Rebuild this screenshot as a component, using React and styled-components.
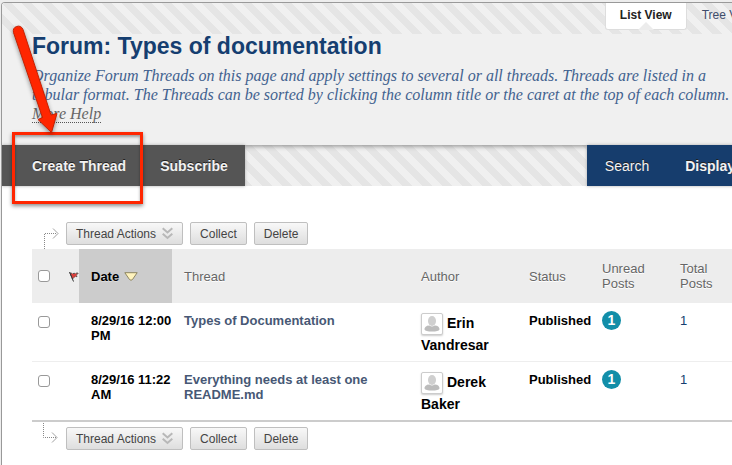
import React from "react";
import styled, { createGlobalStyle, css } from "styled-components";

const GlobalStyle = createGlobalStyle`
  * { box-sizing: border-box; }
  body {
    margin: 0;
    background: #fff;
    color: #000;
    font-family: "Liberation Sans", Arial, Helvetica, sans-serif;
    font-size: 13px;
    line-height: 15px;
  }
`;

const stripes = css`
  background-color: #f0f0f0;
  background-image: linear-gradient(
    45deg,
    #e5e5e5 25%,
    #f0f0f0 25%,
    #f0f0f0 50%,
    #e5e5e5 50%,
    #e5e5e5 75%,
    #f0f0f0 75%
  );
  background-size: 20px 20px;
`;

const Page = styled.div`
  position: relative;
  overflow: hidden;
  min-height: 100vh;
  padding: 2px 0 0 1px;
  background: #ededed;
`;

const Panel = styled.main`
  margin-right: -40px;
  min-height: calc(100vh - 2px);
  border: solid #999;
  border-width: 1px 0 0 1px;
  border-top-left-radius: 4px;
  background: #fff;
  overflow: hidden;
`;

const Header = styled.header`
  background: #f0f0f0;
  min-height: 142px;
`;

const TabStrip = styled.nav`
  ${stripes}
  display: flex;
  justify-content: flex-end;
  align-items: flex-start;
  height: 31px;
`;

const Tab = styled.a`
  position: relative;
  padding: 5px 14px 6px;
  color: ${(p) => (p.$active ? "#222" : "#3f4d6b")};
  font-size: 12px;
  font-weight: ${(p) => (p.$active ? "bold" : "normal")};
  text-decoration: none;
  border: 1px solid transparent;
  border-top: 0;
  &:last-child {
    padding-right: 16px;
  }
  ${(p) =>
    p.$active &&
    css`
      background: #fff;
      border-color: #ddd;
      border-radius: 0 0 3px 3px;
      &::after {
        content: "";
        position: absolute;
        left: calc(50% - 8px);
        bottom: -1px;
        border: 8px solid transparent;
        border-top: 0;
        border-bottom-color: #ececec;
      }
    `}
`;

const Intro = styled.div`
  padding: 0 30px;
`;

const Title = styled.h1`
  margin: 0;
  color: #153e70;
  font-size: 23px;
  line-height: 24px;
`;

const Help = styled.p`
  margin: 8px 0 0;
  max-width: 700px;
  color: #42628f;
  font-family: Georgia, "Liberation Serif", serif;
  font-size: 16px;
  font-style: italic;
  line-height: 19px;
`;

const HelpLine = styled.span`
  display: block;
`;

const HelpLink = styled.a`
  color: #666;
  text-decoration: none;
  border-bottom: 1px dotted #555;
`;

const Toolbar = styled.div`
  ${stripes}
  display: flex;
  justify-content: space-between;
  box-shadow: inset 0 5px 5px -4px #888;
`;

const Group = styled.div`
  display: flex;
  background: ${(p) => (p.$primary ? "#163d6d" : "#555")};
  box-shadow: 0 0 3px #aaa;
`;

const ToolButton = styled.button`
  height: 41px;
  padding: 0 ${(p) => (p.$menu ? 37 : 18)}px 0 18px;
  border: 0;
  background: none;
  color: #f2f2f2;
  font: ${(p) => (p.$plain ? "normal" : "bold")} 14px "Liberation Sans", Arial, sans-serif;
  text-shadow: 0 -1px 0 #222;
`;

const MainButton = styled(ToolButton)`
  padding: 0 17px;
  &:first-child {
    padding-left: 30px;
  }
`;

const Content = styled.section`
  padding: 36px 0 0 30px;
`;

const ActionBar = styled.div`
  display: flex;
  gap: 7px;
  padding-left: 10px;
  height: ${(p) => (p.$bottom ? 28 : 27)}px;
  align-items: ${(p) => (p.$bottom ? "flex-end" : "flex-start")};
`;

const Elbow = styled.svg`
  flex: none;
  align-self: flex-end;
  width: 17px;
  height: ${(p) => (p.$bottom ? 28 : 22)}px;
`;

const Action = styled.button`
  display: flex;
  align-items: center;
  gap: 6px;
  height: 23px;
  padding: 0 9px;
  border: 1px solid #bfbfbf;
  border-radius: 2px;
  background: linear-gradient(#f8f8f8, #dedede);
  color: #444;
  font: 12px "Liberation Sans", Arial, sans-serif;
  white-space: nowrap;
`;

const Table = styled.table`
  width: 100%;
  table-layout: fixed;
  border-collapse: separate;
  border-spacing: 0;
  border-bottom: 2px solid #ccc;
`;

const Col = styled.col`
  width: ${(p) => (p.$w ? `${p.$w}px` : "auto")};
`;

const Head = styled.th`
  height: 54px;
  padding: 0 ${(p) => (p.$tight ? 0 : 12)}px 0 ${(p) => (p.$tight ? 6 : 12)}px;
  background: ${(p) => (p.$sorted ? "#ccc" : "#ededed")};
  color: ${(p) => (p.$sorted ? "#000" : "#666")};
  font-weight: ${(p) => (p.$sorted ? "bold" : "normal")};
  text-align: left;
  vertical-align: middle;
  text-shadow: 0 1px 0 ${(p) => (p.$sorted ? "#ddd" : "#fff")};
`;

const Cell = styled.td`
  height: 58px;
  padding: ${(p) => p.$top || 10}px 0 0 ${(p) => (p.$tight ? 6 : 12)}px;
  font-weight: ${(p) => (p.$plain ? "normal" : "bold")};
  vertical-align: top;
`;

const Row = styled.tr`
  & + & > td {
    height: 59px;
    border-top: 1px solid #eee;
  }
`;

const Inline = styled.div`
  display: flex;
  align-items: center;
  justify-content: ${(p) => (p.$spread ? "space-between" : "flex-start")};
  gap: 5px;
`;

const Check = styled.input`
  appearance: none;
  display: block;
  width: 12px;
  height: 12px;
  margin: 0;
  border: 1px solid #999;
  border-radius: 3px;
  background: #fff;
`;

const ThreadLink = styled.a`
  display: block;
  max-width: 190px;
  color: #475875;
  text-decoration: none;
`;

const Author = styled.div`
  max-width: 80px;
  font-size: 14px;
  line-height: 20px;
`;

const Avatar = styled.svg`
  width: 22px;
  height: 22px;
  margin-right: 4px;
  vertical-align: -7px;
  border: 1px solid #ccc;
  border-radius: 2px;
  background: #fff;
  box-shadow: 0 1px 2px #ccc;
`;

const Badge = styled.a`
  display: block;
  width: 19px;
  height: 19px;
  border-radius: 50%;
  background: #128ea8;
  color: #fff;
  font-size: 14px;
  line-height: 19px;
  text-align: center;
  text-decoration: none;
`;

const Count = styled.a`
  color: #153e70;
  text-decoration: none;
`;

const Highlight = styled.div`
  position: absolute;
  left: 12px;
  top: 132px;
  width: 131px;
  height: 72px;
  border: 3px solid #ff2600;
  box-shadow: 0 2px 4px rgba(0, 0, 0, 0.45), inset 0 2px 3px rgba(0, 0, 0, 0.35);
  pointer-events: none;
`;

const Pointer = styled.svg`
  position: absolute;
  left: 0;
  top: 20px;
  width: 80px;
  height: 120px;
  filter: drop-shadow(0 2px 2px rgba(0, 0, 0, 0.4));
  pointer-events: none;
`;

const threads = [
  { date: "8/29/16 12:00 PM", title: "Types of Documentation", author: "Erin Vandresar" },
  { date: "8/29/16 11:22 AM", title: "Everything needs at least one README.md", author: "Derek Baker" },
];

function Chevrons() {
  return (
    <svg width="11" height="13" viewBox="0 0 11 13" fill="none" stroke="#b8b8b8" strokeWidth="2">
      <path d="M.7 1.2 5.5 5.4 10.3 1.2M.7 6.8 5.5 11 10.3 6.8" />
    </svg>
  );
}

function Actions({ bottom }) {
  return (
    <ActionBar $bottom={bottom}>
      <Elbow $bottom={bottom} viewBox={bottom ? "0 0 17 28" : "0 0 17 22"} fill="none" stroke="#888">
        {bottom ? (
          <>
            <path strokeDasharray="1 1" d="M1.5 1V15.5H14" />
            <path d="M10 10.5l5 5-5 5" strokeWidth=".8" />
          </>
        ) : (
          <>
            <path strokeDasharray="1 1" d="M2.5 22V6.5H15" />
            <path d="M11 1.5l5 5-5 5" strokeWidth=".8" />
          </>
        )}
      </Elbow>
      <Action type="button">
        Thread Actions <Chevrons />
      </Action>
      <Action type="button">Collect</Action>
      <Action type="button">Delete</Action>
    </ActionBar>
  );
}

function AvatarIcon() {
  return (
    <Avatar viewBox="0 0 20 20" aria-hidden="true">
      <ellipse cx="10" cy="7" rx="4" ry="5" fill="#cfcfcf" />
      <path d="M2.5 15.5C2.5 12 6 11.5 7.5 11.5Q10 13.5 12.5 11.5C14.5 11.5 17.5 12 17.5 15.5Q16.5 17.5 10 17.5T2.5 15.5Z" fill="#bcbcbc" />
    </Avatar>
  );
}

export default function App() {
  return (
    <>
      <GlobalStyle />
      <Page>
        <Panel>
          <Header>
            <TabStrip>
              <Tab href="#list" $active>List View</Tab>
              <Tab href="#tree">Tree View</Tab>
            </TabStrip>
            <Intro>
              <Title>Forum: Types of documentation</Title>
              <Help>
                Organize Forum Threads on this page and apply settings to several or all threads.
                Threads are listed in a tabular format. The Threads can be sorted by clicking the
                column title or the caret at the top of each column.
                <HelpLine>
                  <HelpLink href="#help">More Help</HelpLink>
                </HelpLine>
              </Help>
            </Intro>
          </Header>
          <Toolbar>
            <Group>
              <MainButton type="button">Create Thread</MainButton>
              <MainButton type="button">Subscribe</MainButton>
            </Group>
            <Group $primary>
              <ToolButton type="button" $plain>Search</ToolButton>
              <ToolButton type="button" $menu>Display</ToolButton>
            </Group>
          </Toolbar>
          <Content>
            <Actions />
            <Table>
              <colgroup>
                <Col $w={47} />
                <Col $w={93} />
                <Col $w={237} />
                <Col $w={108} />
                <Col $w={73} />
                <Col $w={78} />
                <Col />
              </colgroup>
              <thead>
                <tr>
                  <Head $tight>
                    <Inline $spread>
                      <Check type="checkbox" aria-label="Select all threads" />
                      <svg width="10" height="11" viewBox="0 0 10 11" aria-label="Flag">
                        <path d="M1 2 4 2.5 9.5 2 7.5 4 8 5.5 5.5 6 3.5 8Z" fill="#d8403c" stroke="#555" strokeDasharray="2 1" />
                        <path d="M.5 1 4.5 10.5" stroke="#333" />
                      </svg>
                    </Inline>
                  </Head>
                  <Head $sorted>
                    <Inline>
                      Date
                      <svg width="14" height="9" viewBox="0 0 14 9" aria-hidden="true">
                        <path d="M.8.7H13.2L8.5 7.5Q7 9 5.5 7.5Z" fill="#fff3bd" stroke="#8d8560" />
                      </svg>
                    </Inline>
                  </Head>
                  <Head>Thread</Head>
                  <Head>Author</Head>
                  <Head>Status</Head>
                  <Head>Unread Posts</Head>
                  <Head>Total<br />Posts</Head>
                </tr>
              </thead>
              <tbody>
                {threads.map((t) => (
                  <Row key={t.title}>
                    <Cell $tight $top={13}>
                      <Check type="checkbox" aria-label={`Select ${t.title}`} />
                    </Cell>
                    <Cell>{t.date}</Cell>
                    <Cell>
                      <ThreadLink href="#thread">{t.title}</ThreadLink>
                    </Cell>
                    <Cell>
                      <Author><AvatarIcon />{t.author}</Author>
                    </Cell>
                    <Cell>Published</Cell>
                    <Cell $top={8}>
                      <Badge href="#unread">1</Badge>
                    </Cell>
                    <Cell $plain>
                      <Count href="#posts">1</Count>
                    </Cell>
                  </Row>
                ))}
              </tbody>
            </Table>
            <Actions bottom />
          </Content>
        </Panel>
        <Highlight />
        <Pointer viewBox="0 20 80 120" aria-hidden="true">
          <path
            d="M13.5 32.5Q12.5 28 16.5 26.5 21 25 23 29.5L51 115 57 113.5 51.5 132.5 38 119.5 42.5 117.5Z"
            fill="#ff2600"
            stroke="#c42000"
          />
        </Pointer>
      </Page>
    </>
  );
}
